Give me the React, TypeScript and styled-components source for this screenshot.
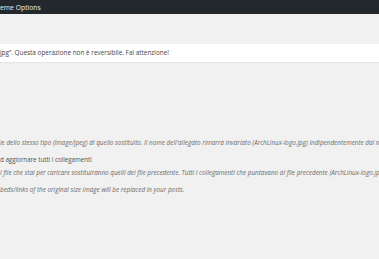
import React from "react";
import styled, { createGlobalStyle } from "styled-components";

const Global = createGlobalStyle`
  html, body { margin: 0; padding: 0; }
  body {
    background: #f1f1f1;
    overflow: hidden;
    font-family: "Open Sans", "Liberation Sans", sans-serif;
    color: #444;
  }
`;

const Page = styled.div`
  width: 379px;
  height: 259px;
  display: flex;
  flex-direction: column;
  overflow: hidden;
`;

const TopBar = styled.div`
  height: 14px;
  background: #23282d;
  color: #eeeeee;
  font-size: 6.8px;
  line-height: 16px;
  white-space: nowrap;
  overflow: hidden;
`;

const Notice = styled.div`
  margin-top: 30px;
  height: 18px;
  background: #ffffff;
  box-shadow: 0 1px 1px rgba(0, 0, 0, 0.04);
  font-size: 6.4px;
  line-height: 18px;
  color: #444;
  white-space: nowrap;
`;

const Options = styled.div`
  margin-top: 76px;
  display: flex;
  flex-direction: column;
`;

const Line = styled.div<{ $italic?: boolean; $gap?: number }>`
  margin-top: ${(p) => p.$gap ?? 0}px;
  height: 10px;
  line-height: 10px;
  font-size: ${(p) => (p.$italic ? 6.35 : 6.2)}px;
  font-weight: 400;
  font-style: ${(p) => (p.$italic ? "italic" : "normal")};
  color: ${(p) => (p.$italic ? "#6a6a6a" : "#505050")};
  white-space: nowrap;
`;

export default function App() {
  return (
    <>
      <Global />
      <Page>
        <TopBar>eme Options</TopBar>
        <Notice>
          jpg”. Questa operazione non è reversibile. Fai attenzione!
        </Notice>
        <Options>
          <Line $italic>
            le dello stesso tipo (image/jpeg) di quello sostituito. Il nome
            dell'allegato rimarrà invariato (ArchLinux-logo.jpg)
            indipendentemente dal nome del file che caricherai.
          </Line>
          <Line $gap={7}>d aggiornare tutti i collegamenti</Line>
          <Line $italic $gap={3}>
            l file che stai per caricare sostituiranno quelli del file
            precedente. Tutti i collegamenti che puntavano al file precedente
            (ArchLinux-logo.jpg) saranno aggiornati.
          </Line>
          <Line $italic $gap={7}>
            beds/links of the original size image will be replaced in your
            posts.
          </Line>
        </Options>
      </Page>
    </>
  );
}
